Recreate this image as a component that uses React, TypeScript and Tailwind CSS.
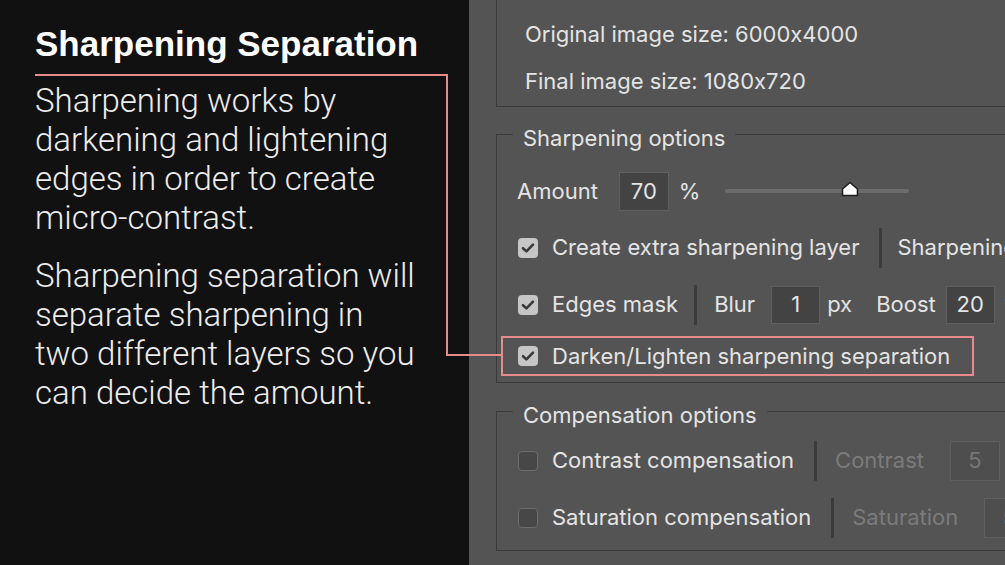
import React from "react";

function Check({ on }: { on: boolean }) {
  if (!on)
    return <div className="w-[20px] h-[20px] shrink-0 rounded-[4px] bg-[#474747] border border-[#6c6c6c]" />;
  return (
    <div className="w-[20px] h-[20px] shrink-0 rounded-[4px] bg-[#c6c6c6] flex items-center justify-center">
      <svg width="14" height="12" viewBox="0 0 14 12">
        <path d="M2 6.2 L5.4 9.4 L12 2.6" fill="none" stroke="#3a3a3a" strokeWidth="2.6" strokeLinecap="round" strokeLinejoin="round" />
      </svg>
    </div>
  );
}

function Sep({ ml }: { ml: string }) {
  return <div className={`w-[3px] h-[40px] bg-[#3b3b3b] shrink-0 ${ml}`} />;
}

export default function App() {
  return (
    <div className="relative flex w-[1005px] h-[565px] overflow-hidden">
      <div className="w-[469px] shrink-0 bg-[#111111] pl-[35px] pt-[24px] text-white">
        <h1 className="font-['Liberation_Sans',Arial,sans-serif] font-bold text-[35px] leading-[40px]">
          Sharpening Separation
        </h1>
        <div className="mt-[17px] font-['Roboto',sans-serif] font-light text-[33px] leading-[39px] text-[#ececec] whitespace-nowrap">
          <p>
            Sharpening works by
            <br />
            darkening and lightening
            <br />
            edges in order to create
            <br />
            micro-contrast.
          </p>
          <p className="mt-[19px]">
            Sharpening separation will
            <br />
            separate sharpening in
            <br />
            two different layers so you
            <br />
            can decide the amount.
          </p>
        </div>
      </div>

      <div className="flex-1 bg-[#545454] pl-[27px] font-['Inter',sans-serif] [font-feature-settings:'calt'_0] text-[22px] text-[#e4e4e4] whitespace-nowrap">
        <div className="w-[600px] h-[107px] border-l border-b border-[#3b3b3b] pl-[28px] pt-[11px] leading-[47px]">
          <div>Original image size: 6000x4000</div>
          <div>Final image size: 1080x720</div>
        </div>

        <fieldset className="mt-[11px] w-[600px] border border-[#3b3b3b] pb-[6px]">
          <legend className="ml-[16px] px-[10px] pt-[8px] leading-[24px]">Sharpening options</legend>
          <div className="mt-[13px] h-[56px] flex items-center pl-[20px]">
            <span>Amount</span>
            <div className="ml-[21px] w-[50px] h-[39px] bg-[#434343] border border-[#606060] flex items-center justify-center">70</div>
            <span className="ml-[10px]">%</span>
            <div className="ml-[25px] w-[184px] h-[4px] rounded-full bg-[#6b6b6b] relative">
              <svg className="absolute left-[116px] top-[-8px]" width="18" height="16" viewBox="0 0 18 16">
                <path d="M1.5 8 L9 1.5 L16.5 8 L16.5 14.5 L1.5 14.5 Z" fill="#ffffff" stroke="#1e1e1e" strokeWidth="1.6" strokeLinejoin="round" />
              </svg>
            </div>
          </div>
          <div className="h-[57px] flex items-center pl-[21px]">
            <Check on />
            <span className="ml-[14px]">Create extra sharpening layer</span>
            <Sep ml="ml-[20px]" />
            <span className="ml-[15px]">Sharpening</span>
          </div>
          <div className="h-[57px] flex items-center pl-[21px]">
            <Check on />
            <span className="ml-[14px]">Edges mask</span>
            <Sep ml="ml-[16px]" />
            <span className="ml-[17px]">Blur</span>
            <div className="ml-[16px] w-[49px] h-[38px] bg-[#434343] border border-[#606060] flex items-center justify-center">1</div>
            <span className="ml-[7px]">px</span>
            <span className="ml-[24px]">Boost</span>
            <div className="ml-[10px] w-[49px] h-[38px] bg-[#434343] border border-[#606060] flex items-center justify-center">20</div>
            <span className="ml-[8px]">%</span>
          </div>
          <div className="mt-[3px] ml-[4px] w-[473px] h-[40px] border-2 border-[#e8898b] flex items-center pl-[15px]">
            <Check on />
            <span className="ml-[14px]">Darken/Lighten sharpening separation</span>
          </div>
        </fieldset>

        <fieldset className="mt-[12px] w-[600px] border border-[#3b3b3b] pb-[4px]">
          <legend className="ml-[16px] px-[10px] pt-[8px] leading-[24px]">Compensation options</legend>
          <div className="mt-[5px] h-[57px] flex items-center pl-[21px]">
            <Check on={false} />
            <span className="ml-[14px]">Contrast compensation</span>
            <Sep ml="ml-[20px]" />
            <span className="ml-[18px] text-[#7b7b7b]">Contrast</span>
            <div className="ml-[26px] w-[50px] h-[40px] bg-[#4e4e4e] border border-[#5f5f5f] flex items-center justify-center text-[#777777]">5</div>
          </div>
          <div className="h-[57px] flex items-center pl-[21px]">
            <Check on={false} />
            <span className="ml-[14px]">Saturation compensation</span>
            <Sep ml="ml-[20px]" />
            <span className="ml-[18px] text-[#7b7b7b]">Saturation</span>
            <div className="ml-[26px] w-[50px] h-[40px] bg-[#4e4e4e] border border-[#5f5f5f] flex items-center justify-center text-[#777777]">5</div>
          </div>
        </fieldset>
      </div>

      <div className="absolute left-[35px] top-[74px] w-[413px] h-[282px] border-t-2 border-r-2 border-[#e8898b]" />
      <div className="absolute left-[446px] top-[354px] w-[56px] h-[2px] bg-[#e8898b]" />
    </div>
  );
}
